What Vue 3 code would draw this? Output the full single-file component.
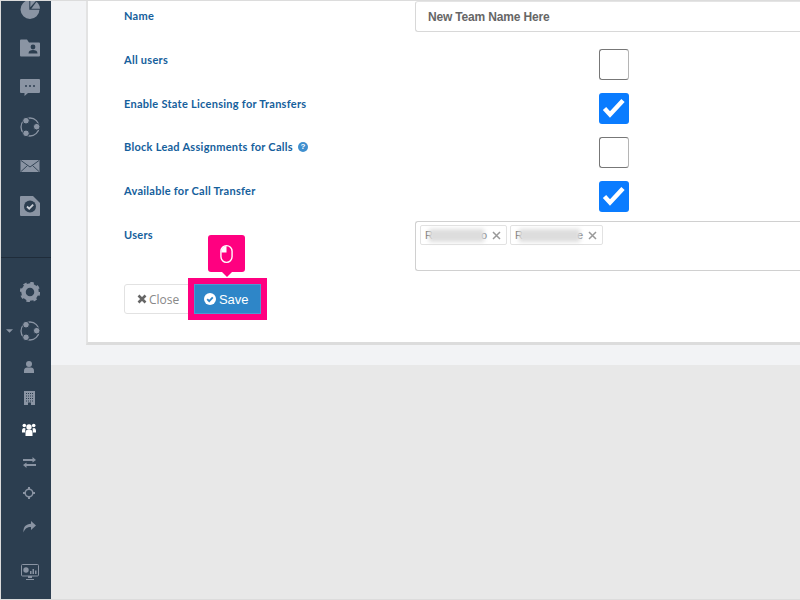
<script setup>
const chips = [
  { id: 1, first: 'R', last: 'o', blur: 55 },
  { id: 2, first: 'R', last: 'e', blur: 61 },
]
</script>

<template>
  <div class="screen">
    <aside class="sidebar">
      <div class="group top">
        <div class="item">
          <svg width="20" height="20" viewBox="0 0 20 20"><path d="M9.300 1A9.500 9.500 0 1 0 19.500 10.800H9.300z"/><path d="M10.300 0A9.300 9.300 0 0 1 15.800 2L10.300 8.300z"/><path d="M16.500 2.700A9.300 9.300 0 0 1 20 9.800H11.300z"/></svg>
        </div>
        <div class="item">
          <svg width="20" height="18" viewBox="0 0 20 18"><path d="M1 0.500h6l2 3h10a1 1 0 0 1 1 1v12a1 1 0 0 1-1 1H1a1 1 0 0 1-1-1v-15a1 1 0 0 1 1-1z"/><circle class="dark" cx="13" cy="8" r="2.400"/><path class="dark" d="M8.500 14.500c0-2.600 2-3.400 4.500-3.400s4.500 .8 4.500 3.400z"/></svg>
        </div>
        <div class="item">
          <svg width="20" height="18" viewBox="0 0 20 18"><path d="M1 1h18a1 1 0 0 1 1 1v12a1 1 0 0 1-1 1H8l-3.500 3v-3H1a1 1 0 0 1-1-1V2a1 1 0 0 1 1-1z"/><circle class="dark" cx="6" cy="8" r="1"/><circle class="dark" cx="10" cy="8" r="1"/><circle class="dark" cx="14" cy="8" r="1"/></svg>
        </div>
        <div class="item">
          <svg width="24" height="24" viewBox="0 0 24 24"><circle class="ring" cx="12" cy="12" r="9"/><circle class="node" cx="8" cy="5.700" r="3.300"/><circle class="node" cx="18.700" cy="11.700" r="3.300"/><circle class="node" cx="8" cy="18.300" r="3.300"/></svg>
        </div>
        <div class="item">
          <svg width="20" height="14" viewBox="0 0 20 14"><rect x="0.500" y="1" width="19" height="12"/><path class="line" d="M1 1.500l9 6.500 9-6.500M1 12.500l6.500-6M19 12.500l-6.500-6"/></svg>
        </div>
        <div class="item">
          <svg width="20" height="20" viewBox="0 0 20 20"><path d="M1 0h12l7 7v12a1 1 0 0 1-1 1H1a1 1 0 0 1-1-1V1a1 1 0 0 1 1-1z"/><circle class="dark" cx="10" cy="10.500" r="6"/><path class="tick" d="M7 10.500l2.200 2.200 4-4"/></svg>
        </div>
      </div>

      <div class="rule"></div>

      <div class="group lower">
        <div class="item">
          <svg width="20" height="20" viewBox="0 0 20 20"><circle class="gear" cx="10" cy="10" r="6.500"/><circle class="teeth" cx="10" cy="10" r="9"/></svg>
        </div>
        <div class="item">
          <svg class="caret" width="7" height="4" viewBox="0 0 8 4"><path d="M0 0h8L4 4z"/></svg>
          <svg width="24" height="24" viewBox="0 0 24 24"><circle class="ring" cx="12" cy="12" r="9"/><circle class="node" cx="8" cy="5.700" r="3.300"/><circle class="node" cx="18.700" cy="11.700" r="3.300"/><circle class="node" cx="8" cy="18.300" r="3.300"/></svg>
        </div>
        <div class="small">
          <svg width="10" height="12" viewBox="0 0 10 12"><circle cx="5" cy="3" r="3"/><path d="M0 12V9.500C0 7.500 1.500 6.500 3 6.500h4c1.500 0 3 1 3 3V12z"/></svg>
        </div>
        <div class="small up">
          <svg width="11" height="14" viewBox="0 0 11 14"><rect width="11" height="14"/><path class="dots" d="M2 2.500h7M2 5h7M2 7.500h7M2 10h7"/><rect class="dark" x="4" y="11.500" width="3" height="2.500"/></svg>
        </div>
        <div class="small active up">
          <svg width="14" height="13" viewBox="0 0 14 13"><circle cx="7" cy="4" r="2.700"/><circle cx="2.300" cy="2.500" r="1.800"/><circle cx="11.700" cy="2.500" r="1.800"/><path d="M0 8c0-2 .8-3 2-3l1.500.5L3 9.500H0zM14 8c0-2-.8-3-2-3l-1.500.5.500 4h3z"/><path d="M3.500 13V9.500c0-1.800 1-2.800 2-2.800h3c1 0 2 1 2 2.800V13z"/></svg>
        </div>
        <div class="small">
          <svg width="13" height="11" viewBox="0 0 13 11"><path d="M0 2h9.500V0L13 3 9.500 5.500V4H0zM13 7H3.500V5.500L0 8l3.500 3V9H13z"/></svg>
        </div>
        <div class="small up2">
          <svg width="12" height="12" viewBox="0 0 12 12"><circle class="ring thin" cx="6" cy="6" r="3.800"/><path d="M5 0h2v3H5zM5 9h2v3H5zM0 5h3v2H0zM9 5h3v2H9z"/></svg>
        </div>
        <div class="small">
          <svg width="13" height="12" viewBox="0 0 13 12"><path d="M8 0l5 4.500L8 9V6C4 6 2 7.500 .5 11.500 0 6 3 3 8 2.800z"/></svg>
        </div>
        <div class="item monitor">
          <svg width="18" height="16" viewBox="0 0 18 16"><rect class="frame" x="0.500" y="0.500" width="17" height="11.500" rx="1"/><circle cx="5" cy="6" r="2.700"/><path d="M9 10V7h1.500v3zM11.500 10V5H13v5zM14 10V6.500h1.500V10zM7 14h4v-2H7zM5 15h8v1H5z"/></svg>
        </div>
      </div>
    </aside>

    <main class="main">
      <section class="upper">
        <div class="card">
          <div class="row">
            <span class="label">Name</span>
            <input class="text-input" value="New Team Name Here" />
          </div>
          <div class="row">
            <span class="label">All users</span>
            <span class="check"></span>
          </div>
          <div class="row">
            <span class="label">Enable State Licensing for Transfers</span>
            <span class="check on">
              <svg width="30" height="31" viewBox="0 0 30 31"><path d="M5.500 15.500l5.500 6 13-14"/></svg>
            </span>
          </div>
          <div class="row nudge">
            <span class="label">Block Lead Assignments for Calls<i class="help">?</i></span>
            <span class="check"></span>
          </div>
          <div class="row nudge">
            <span class="label">Available for Call Transfer</span>
            <span class="check on">
              <svg width="30" height="31" viewBox="0 0 30 31"><path d="M5.500 15.500l5.500 6 13-14"/></svg>
            </span>
          </div>
          <div class="row users-row nudge">
            <span class="label">Users</span>
            <div class="users-box">
              <span v-for="c in chips" :key="c.id" class="chip">
                <span>{{ c.first }}</span>
                <span class="blurred" :style="{ width: c.blur + 'px' }"></span>
                <span>{{ c.last }}</span>
                <svg class="chip-x" width="9" height="9" viewBox="0 0 9 9"><path d="M1 1l7 7M8 1L1 8"/></svg>
              </span>
            </div>
          </div>
          <div class="actions">
            <button class="btn close">
              <svg width="10" height="10" viewBox="0 0 10 10"><path d="M1.500 1.500l7 7M8.500 1.500l-7 7"/></svg>
              Close
            </button>
            <div class="highlight">
              <button class="btn save">
                <svg width="12" height="12" viewBox="0 0 12 12"><circle cx="6" cy="6" r="6"/><path d="M3.200 6.200l2 2 3.600-3.800"/></svg>
                Save
              </button>
              <div class="tip">
                <svg width="13" height="20" viewBox="0 0 14 20"><rect class="mouse" x="1" y="1" width="12" height="18" rx="6"/><path class="mouse-fill" d="M7 1.500v7H1.500V7A5.500 5.500 0 0 1 7 1.500z"/></svg>
              </div>
            </div>
          </div>
        </div>
      </section>
      <section class="lower-area"></section>
    </main>
  </div>
</template>

<style scoped>
.screen {
  width: 800px;
  height: 600px;
  box-sizing: border-box;
  border-top: 1px solid #dcdcdc;
  border-left: 1px solid #dcdcdc;
  border-bottom: 1px solid #dcdcdc;
  display: flex;
  overflow: hidden;
  font-family: "Liberation Sans", sans-serif;
}
.sidebar {
  width: 50px;
  flex: none;
  background: #2c3e50;
  color: #8a94a3;
  display: flex;
  flex-direction: column;
  overflow: hidden;
}
.sidebar svg { fill: #8a94a3; display: block; }
.group.top { margin-top: -12px; }
.item {
  height: 39.400px;
  display: flex;
  align-items: center;
  justify-content: center;
  padding-left: 8px;
  position: relative;
}
.small {
  height: 32px;
  display: flex;
  align-items: center;
  justify-content: center;
  padding-left: 6px;
}
.small.up svg { margin-top: -2px; }
.small.up2 svg { margin-top: -4px; }
.small.active svg { fill: #ffffff; }
.rule {
  height: 1px;
  background: #1f2c3a;
  margin-top: 32px;
}
.group.lower { margin-top: 13.500px; }
.caret {
  position: absolute;
  left: 5px;
  top: 18px;
}
.monitor { margin-top: 10px; }
.sidebar .dark { fill: #2c3e50; }
.sidebar .line { fill: none; stroke: #2c3e50; stroke-width: 0.900; }
.sidebar .tick { fill: none; stroke: #c9ced6; stroke-width: 1.800; }
.sidebar .ring { fill: none; stroke: #8a94a3; stroke-width: 1.300; }
.sidebar .ring.thin { stroke-width: 1.500; }
.sidebar .node { stroke: #2c3e50; stroke-width: 1; }
.sidebar .gear { fill: none; stroke: #8a94a3; stroke-width: 4.500; }
.sidebar .teeth { fill: none; stroke: #8a94a3; stroke-width: 2.400; stroke-dasharray: 3.500 3.570; }
.sidebar .dots { fill: none; stroke: #2c3e50; stroke-width: 1; stroke-dasharray: 1 1; }
.sidebar .frame { fill: none; stroke: #8a94a3; stroke-width: 1; }

.main {
  flex: 1;
  min-width: 0;
  display: flex;
  flex-direction: column;
}
.upper {
  height: 364px;
  flex: none;
  background: #f2f3f5;
  padding-left: 35px;
  box-sizing: border-box;
}
.lower-area { flex: 1; background: #e8e8e8; }
.card {
  height: 347px;
  box-sizing: border-box;
  background: #ffffff;
  border-left: 2px solid #e3e3e3;
  border-bottom: 3px solid #dcdcdc;
  padding-left: 36px;
  margin-top: -3px;
  padding-top: 3px;
}
.row {
  height: 44px;
  display: flex;
  align-items: flex-start;
}
.label {
  width: 291px;
  flex: none;
  font-family: Lato, sans-serif;
  font-weight: 700;
  font-size: 11px;
  line-height: 30px;
  letter-spacing: 0.270px;
  color: #15609c;
  display: flex;
  align-items: center;
  gap: 5px;
}
.nudge .label { margin-top: -1px; }
.help {
  width: 10px;
  height: 10px;
  border-radius: 50%;
  background: #3f8fcf;
  color: #ffffff;
  font: 700 8px/10px "Liberation Sans", sans-serif;
  text-align: center;
  letter-spacing: 0;
}
.text-input {
  width: 386px;
  height: 31px;
  box-sizing: border-box;
  border: 1px solid #d8d8d8;
  border-right: none;
  border-top-color: #e4e4e4;
  border-radius: 3px 0 0 3px;
  padding: 0 12px;
  font: 700 12px "Liberation Sans", sans-serif;
  letter-spacing: -0.170px;
  color: #666666;
  outline: none;
  background: #ffffff;
}
.check {
  width: 30px;
  height: 31px;
  box-sizing: border-box;
  margin: 4px 0 0 184px;
  background: #ffffff;
  border: 1px solid #777777;
  border-right-color: #b5b5b5;
  border-radius: 3px;
}
.check.on {
  background: #0a7cff;
  border: none;
}
.check svg { display: block; }
.check path {
  fill: none;
  stroke: #ffffff;
  stroke-width: 4.500;
}
.users-row { height: 50px; }
.users-box {
  width: 386px;
  height: 50px;
  box-sizing: border-box;
  border: 1px solid #d0d0d0;
  border-right: none;
  border-radius: 3px 0 0 3px;
  padding: 3px 4px;
  display: flex;
  align-items: flex-start;
  gap: 3px;
}
.chip {
  height: 20px;
  box-sizing: border-box;
  border: 1px solid #e2e2e2;
  border-radius: 2px;
  padding: 0 5px 0 4px;
  display: flex;
  align-items: center;
  font: 11px "Liberation Sans", sans-serif;
  color: #777777;
}
.blurred {
  height: 13px;
  background: #dddddd;
  filter: blur(2px);
  margin: 0 -3px 0 -4px;
}
.chip-x {
  margin-left: 5px;
  fill: none;
  stroke: #999999;
  stroke-width: 1.500;
}
.actions {
  display: flex;
  align-items: flex-start;
  margin-top: 7px;
}
.btn {
  font-size: 13px;
  box-sizing: border-box;
  display: flex;
  align-items: center;
  cursor: pointer;
}
.close {
  width: 70px;
  height: 30px;
  margin-top: 6px;
  border: 1px solid #e2e2e2;
  border-radius: 3px;
  background: #ffffff;
  color: #888888;
  font-family: "Open Sans", sans-serif;
  font-size: 12px;
  padding: 0 0 0 12px;
  gap: 2px;
}
.close svg { fill: none; stroke: #666666; stroke-width: 2.600; }
.highlight {
  position: relative;
  margin-left: -6px;
  border: 6px solid #ff0080;
  z-index: 1;
  display: flex;
}
.save {
  width: 67px;
  height: 30px;
  background: #2e86c8;
  border: none;
  border-radius: 1px;
  box-shadow: inset 0 0 0 1px #4c98d2;
  color: #ffffff;
  padding: 0 0 0 10px;
  gap: 3px;
  font-family: "Liberation Sans", sans-serif;
  letter-spacing: -0.050px;
}
.save svg { fill: #ffffff; }
.save path { fill: none; stroke: #2e86c8; stroke-width: 1.800; }
.tip {
  position: absolute;
  left: 14px;
  top: -49px;
  width: 37px;
  height: 37px;
  background: #ff0080;
  border-radius: 3px;
  display: flex;
  align-items: center;
  justify-content: center;
}
.tip::after {
  content: "";
  position: absolute;
  left: 13.500px;
  bottom: -5px;
  border-left: 5px solid transparent;
  border-right: 5px solid transparent;
  border-top: 5px solid #ff0080;
}
.mouse { fill: none; stroke: #ffffff; stroke-width: 1.500; }
.mouse-fill { fill: #ffffff; }
</style>
